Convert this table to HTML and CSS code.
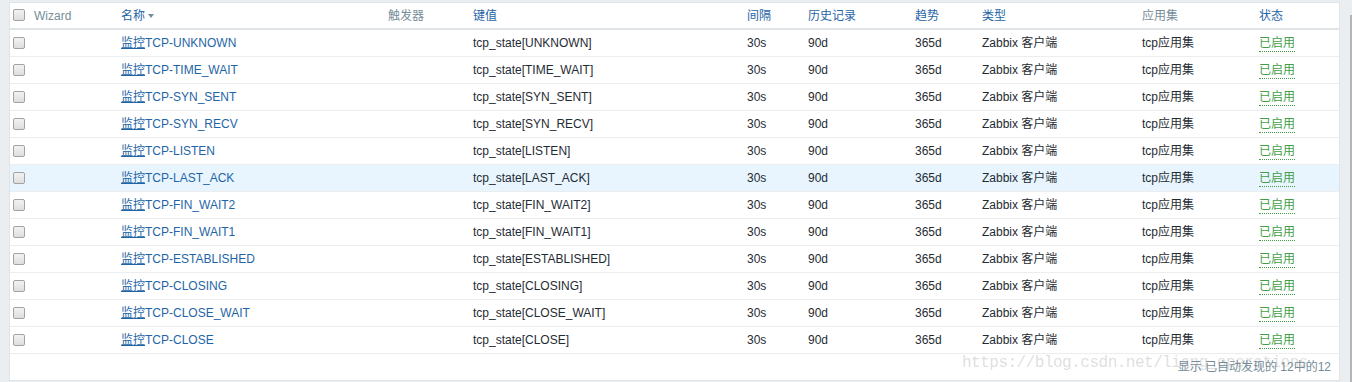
FILE: index.html
```html
<!DOCTYPE html>
<html lang="zh">
<head>
<meta charset="utf-8">
<title>监控项</title>
<link rel="stylesheet" href="styles.css">
</head>
<body>
<div class="page">
  <div class="panel">
    <table class="list">
      <colgroup>
        <col class="c-check"><col class="c-wizard"><col class="c-name"><col class="c-trig"><col class="c-key"><col class="c-int"><col class="c-hist"><col class="c-trend"><col class="c-type"><col class="c-app"><col class="c-status">
      </colgroup>
      <thead>
        <tr>
          <th><span class="cb"></span></th>
          <th class="muted">Wizard</th>
          <th class="sort">名称<span class="arrow"></span></th>
          <th class="muted">触发器</th>
          <th class="sort">键值</th>
          <th class="sort">间隔</th>
          <th class="sort">历史记录</th>
          <th class="sort">趋势</th>
          <th class="sort">类型</th>
          <th class="muted">应用集</th>
          <th class="sort">状态</th>
        </tr>
      </thead>
      <tbody>
        <tr><td><span class="cb"></span></td><td></td><td class="link"><span class="u">监控</span>TCP-UNKNOWN</td><td></td><td>tcp_state[UNKNOWN]</td><td>30s</td><td>90d</td><td>365d</td><td>Zabbix 客户端</td><td>tcp应用集</td><td><span class="green">已启用</span></td></tr>
        <tr><td><span class="cb"></span></td><td></td><td class="link"><span class="u">监控</span>TCP-TIME_WAIT</td><td></td><td>tcp_state[TIME_WAIT]</td><td>30s</td><td>90d</td><td>365d</td><td>Zabbix 客户端</td><td>tcp应用集</td><td><span class="green">已启用</span></td></tr>
        <tr><td><span class="cb"></span></td><td></td><td class="link"><span class="u">监控</span>TCP-SYN_SENT</td><td></td><td>tcp_state[SYN_SENT]</td><td>30s</td><td>90d</td><td>365d</td><td>Zabbix 客户端</td><td>tcp应用集</td><td><span class="green">已启用</span></td></tr>
        <tr><td><span class="cb"></span></td><td></td><td class="link"><span class="u">监控</span>TCP-SYN_RECV</td><td></td><td>tcp_state[SYN_RECV]</td><td>30s</td><td>90d</td><td>365d</td><td>Zabbix 客户端</td><td>tcp应用集</td><td><span class="green">已启用</span></td></tr>
        <tr><td><span class="cb"></span></td><td></td><td class="link"><span class="u">监控</span>TCP-LISTEN</td><td></td><td>tcp_state[LISTEN]</td><td>30s</td><td>90d</td><td>365d</td><td>Zabbix 客户端</td><td>tcp应用集</td><td><span class="green">已启用</span></td></tr>
        <tr class="hover"><td><span class="cb"></span></td><td></td><td class="link"><span class="u">监控</span>TCP-LAST_ACK</td><td></td><td>tcp_state[LAST_ACK]</td><td>30s</td><td>90d</td><td>365d</td><td>Zabbix 客户端</td><td>tcp应用集</td><td><span class="green">已启用</span></td></tr>
        <tr><td><span class="cb"></span></td><td></td><td class="link"><span class="u">监控</span>TCP-FIN_WAIT2</td><td></td><td>tcp_state[FIN_WAIT2]</td><td>30s</td><td>90d</td><td>365d</td><td>Zabbix 客户端</td><td>tcp应用集</td><td><span class="green">已启用</span></td></tr>
        <tr><td><span class="cb"></span></td><td></td><td class="link"><span class="u">监控</span>TCP-FIN_WAIT1</td><td></td><td>tcp_state[FIN_WAIT1]</td><td>30s</td><td>90d</td><td>365d</td><td>Zabbix 客户端</td><td>tcp应用集</td><td><span class="green">已启用</span></td></tr>
        <tr><td><span class="cb"></span></td><td></td><td class="link"><span class="u">监控</span>TCP-ESTABLISHED</td><td></td><td>tcp_state[ESTABLISHED]</td><td>30s</td><td>90d</td><td>365d</td><td>Zabbix 客户端</td><td>tcp应用集</td><td><span class="green">已启用</span></td></tr>
        <tr><td><span class="cb"></span></td><td></td><td class="link"><span class="u">监控</span>TCP-CLOSING</td><td></td><td>tcp_state[CLOSING]</td><td>30s</td><td>90d</td><td>365d</td><td>Zabbix 客户端</td><td>tcp应用集</td><td><span class="green">已启用</span></td></tr>
        <tr><td><span class="cb"></span></td><td></td><td class="link"><span class="u">监控</span>TCP-CLOSE_WAIT</td><td></td><td>tcp_state[CLOSE_WAIT]</td><td>30s</td><td>90d</td><td>365d</td><td>Zabbix 客户端</td><td>tcp应用集</td><td><span class="green">已启用</span></td></tr>
        <tr><td><span class="cb"></span></td><td></td><td class="link"><span class="u">监控</span>TCP-CLOSE</td><td></td><td>tcp_state[CLOSE]</td><td>30s</td><td>90d</td><td>365d</td><td>Zabbix 客户端</td><td>tcp应用集</td><td><span class="green">已启用</span></td></tr>
      </tbody>
    </table>
    <div class="footer">显示 已自动发现的 12中的12</div>
    <div class="watermark">https://blog.csdn.net/liang_operations</div>
  </div>
  <div class="gutter"><div class="scroll"></div></div>
</div>
</body>
</html>
```
FILE: styles.css
```css
html, body {
  margin: 0;
  padding: 0;
  background: #ebeef0;
}
body {
  font-family: "Liberation Sans", Arial, "Noto Sans CJK SC", sans-serif;
  font-size: 12px;
  line-height: 14px;
  color: #1f2c33;
}
.page {
  display: flex;
  height: 382px;
  overflow: hidden;
}
.panel {
  position: relative;
  margin: 2px 0 0 9px;
  width: 1329px;
  height: 377px;
  background: #fff;
  border: 1px solid #dfe4e7;
  overflow: hidden;
}
.gutter {
  flex: 1;
  display: flex;
  justify-content: flex-end;
  padding-top: 15px;
}
.scroll {
  width: 2px;
  background: #b4b4b4;
}
.list {
  border-collapse: collapse;
  table-layout: fixed;
  width: 1329px;
}
.c-check { width: 24px; }
.c-wizard { width: 87px; }
.c-name { width: 267px; }
.c-trig { width: 85px; }
.c-key { width: 274px; }
.c-int { width: 61px; }
.c-hist { width: 107px; }
.c-trend { width: 67px; }
.c-type { width: 160px; }
.c-app { width: 117px; }
.c-status { width: 80px; }

.list th {
  height: 25px;
  padding: 0;
  text-align: left;
  font-weight: normal;
  border-bottom: 2px solid #dfe4e7;
  vertical-align: middle;
  white-space: nowrap;
  line-height: 14px;
}
.list th.muted { color: #768d99; }
.list th.sort { color: #1f65a6; }
.list td {
  height: 26px;
  padding: 1px 0 0 0;
  box-sizing: border-box;
  border-bottom: 1px solid #ebeef0;
  vertical-align: middle;
  white-space: nowrap;
  line-height: 14px;
}
.list tbody tr { height: 27px; }
.list th:first-child, .list td:first-child {
  padding-left: 3px;
}
.list tr.hover td { background: #e8f5ff; }
.link { color: #1f65a6; }
.u { text-decoration: underline; }
.green {
  color: #429e47;
  border-bottom: 1px dotted #429e47;
  padding-bottom: 1px;
}
.cb {
  display: inline-block;
  width: 10px;
  height: 10px;
  border: 1px solid #a3a3a3;
  border-radius: 2px;
  background: linear-gradient(#f2f2f2, #dedede);
  vertical-align: middle;
  margin-top: -2px;
}
.arrow {
  display: inline-block;
  width: 0;
  height: 0;
  margin-left: 3px;
  border-left: 3px solid transparent;
  border-right: 3px solid transparent;
  border-top: 4px solid #768d99;
  vertical-align: middle;
}
.footer {
  height: 26px;
  line-height: 26px;
  text-align: right;
  padding-right: 8px;
  color: #768d99;
}
.watermark {
  position: absolute;
  left: 952px;
  top: 352px;
  line-height: 16px;
  font-family: "Liberation Mono", "Courier New", monospace;
  font-size: 16px;
  letter-spacing: -0.5px;
  color: rgba(120, 120, 120, 0.25);
  white-space: nowrap;
  pointer-events: none;
}
```
